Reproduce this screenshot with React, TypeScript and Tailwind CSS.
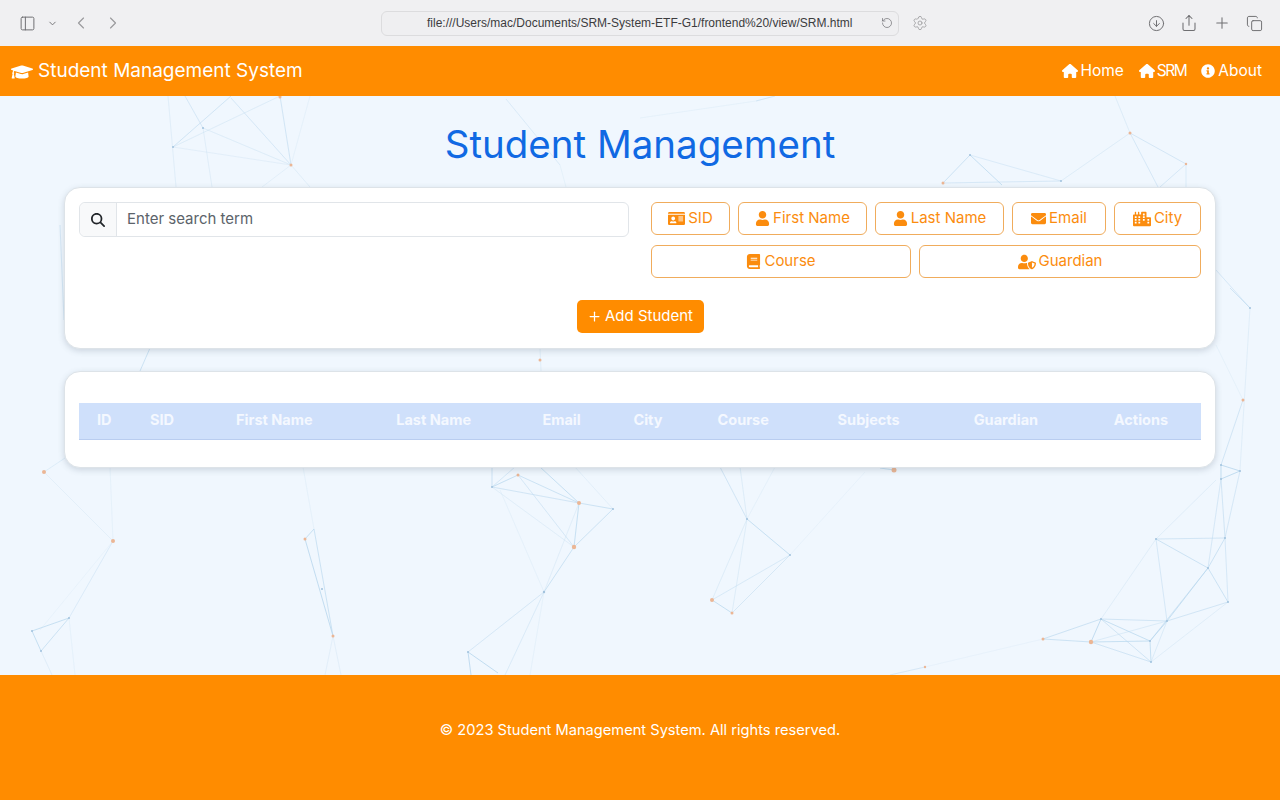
import React from 'react';
import {
  FaBook,
  FaCity,
  FaEnvelope,
  FaGraduationCap,
  FaIdCard,
  FaInfoCircle,
  FaUser,
  FaUserShield,
} from 'react-icons/fa';
import { FaHouse, FaMagnifyingGlass } from 'react-icons/fa6';
import {
  ChevronDown,
  ChevronLeft,
  ChevronRight,
  CircleArrowDown,
  Copy,
  PanelLeft,
  Plus,
  RotateCw,
  Settings,
  Share,
} from 'lucide-react';

// background network: [x1, y1, x2, y2, opacity], page coordinates minus the 96px top bars
const LINES: number[][] = [
  [173, 147, 231, 96, 0.6], [173, 147, 280, 96, 0.35], [203, 128, 291, 165, 0.35], [231, 98, 291, 165, 0.5],
  [280, 96, 291, 165, 0.6], [173, 147, 291, 165, 0.25], [168, 96, 176, 187, 0.3], [185, 96, 203, 128, 0.5],
  [203, 128, 212, 187, 0.3], [291, 165, 310, 187, 0.3], [291, 165, 262, 187, 0.25], [310, 96, 291, 165, 0.2],
  [506, 99, 560, 165, 0.4], [560, 165, 566, 187, 0.2], [756, 101, 640, 118, 0.2], [756, 101, 775, 96, 0.6],
  [970, 155, 943, 183, 0.7], [970, 155, 1002, 185, 0.8], [943, 183, 1061, 181, 0.5], [970, 155, 1061, 181, 0.4],
  [1061, 181, 1130, 133, 0.35], [1130, 133, 1186, 164, 0.55], [1130, 133, 1158, 187, 0.5], [1186, 164, 1160, 187, 0.5],
  [1186, 164, 1186, 187, 0.4], [1115, 96, 1130, 133, 0.35],
  [60, 225, 64, 320, 0.5], [1216, 270, 1250, 308, 0.5], [1230, 288, 1250, 308, 0.6], [1250, 308, 1240, 470, 0.3],
  [1243, 400, 1221, 465, 0.6], [1216, 345, 1243, 400, 0.2], [150, 348, 140, 371, 0.7], [540, 348, 541, 371, 0.3],
  [44, 472, 65, 458, 0.35], [44, 472, 113, 541, 0.25], [110, 467, 113, 541, 0.2], [113, 541, 69, 618, 0.4],
  [113, 541, 40, 630, 0.15], [69, 618, 32, 631, 0.8], [32, 631, 41, 651, 0.8], [69, 618, 41, 651, 0.7],
  [41, 651, 52, 675, 0.3], [69, 618, 75, 675, 0.2],
  [305, 539, 314, 529, 0.8], [305, 539, 333, 636, 0.9], [314, 529, 333, 636, 0.7], [303, 467, 314, 529, 0.2],
  [333, 636, 325, 675, 0.25], [333, 636, 341, 675, 0.25],
  [492, 487, 518, 475, 0.8], [492, 487, 579, 503, 0.6], [518, 475, 579, 503, 0.7], [492, 467, 492, 487, 0.7],
  [515, 467, 492, 487, 0.5], [540, 467, 579, 503, 0.8], [579, 503, 613, 509, 0.7], [579, 503, 574, 547, 0.8],
  [613, 509, 574, 547, 0.7], [518, 475, 574, 547, 0.5], [492, 487, 574, 547, 0.3], [575, 467, 613, 509, 0.25],
  [574, 547, 544, 592, 0.7], [579, 503, 544, 592, 0.3], [544, 592, 468, 652, 0.5], [544, 592, 505, 675, 0.4],
  [500, 490, 544, 592, 0.2], [468, 652, 498, 673, 0.9], [468, 652, 471, 675, 0.9], [544, 592, 530, 675, 0.2],
  [720, 467, 747, 519, 0.6], [740, 467, 747, 519, 0.35], [775, 467, 747, 519, 0.2], [747, 519, 790, 555, 0.8],
  [747, 519, 712, 600, 0.35], [747, 519, 732, 613, 0.35], [790, 555, 712, 600, 0.45], [790, 555, 732, 613, 0.5],
  [712, 600, 732, 613, 0.8], [790, 555, 865, 472, 0.15], [894, 470, 880, 468, 0.8],
  [1221, 465, 1240, 471, 0.9], [1221, 479, 1240, 471, 0.9], [1221, 465, 1221, 479, 0.9], [1240, 471, 1225, 538, 0.5],
  [1221, 479, 1225, 538, 0.6], [1221, 479, 1208, 568, 0.5], [1216, 480, 1156, 539, 0.3],
  [1156, 539, 1225, 538, 0.6], [1156, 539, 1208, 568, 0.7], [1225, 538, 1208, 568, 0.7], [1225, 538, 1228, 602, 0.5],
  [1208, 568, 1228, 602, 0.7], [1208, 568, 1167, 621, 0.8], [1156, 539, 1167, 621, 0.5], [1156, 539, 1101, 619, 0.3],
  [1228, 602, 1167, 621, 0.6], [1228, 602, 1151, 662, 0.3], [1208, 568, 1150, 641, 0.6],
  [1167, 621, 1101, 619, 0.6], [1167, 621, 1150, 641, 0.9], [1167, 621, 1151, 662, 0.4], [1101, 619, 1150, 641, 0.8],
  [1101, 619, 1151, 662, 0.6], [1101, 619, 1091, 642, 0.9], [1101, 619, 1043, 639, 0.7], [1043, 639, 1091, 642, 0.7],
  [1091, 642, 1150, 641, 0.8], [1091, 642, 1151, 662, 0.6], [1091, 642, 1167, 621, 0.4], [1150, 641, 1151, 662, 0.8],
  [1043, 639, 925, 667, 0.15], [925, 667, 890, 675, 0.5],
];

const NODES: number[][] = [
  [291, 165, 1.5, 1], [280, 97, 1.5, 1], [540, 360, 1.5, 1], [1130, 133, 1.5, 1], [1186, 164, 1.2, 1], [943, 183, 1.5, 1],
  [44, 472, 2, 1], [113, 541, 2, 1], [305, 539, 1.5, 1], [333, 636, 1.5, 1], [579, 503, 2, 1], [574, 547, 2.2, 1],
  [518, 475, 1.5, 1], [894, 470, 2.5, 1], [712, 600, 2, 1], [732, 613, 1.5, 1], [1043, 639, 1.5, 1], [1091, 642, 2.2, 1],
  [925, 667, 1.2, 1], [1243, 400, 1.5, 1],
  [173, 147, 1, 0], [203, 128, 1, 0], [970, 155, 1, 0], [1061, 181, 1, 0], [69, 618, 1, 0], [32, 631, 1, 0], [41, 651, 1, 0],
  [322, 589, 1, 0], [492, 487, 1, 0], [613, 509, 1, 0], [544, 592, 1.2, 0], [468, 652, 1, 0], [747, 519, 1, 0], [790, 555, 1, 0],
  [1156, 539, 1, 0], [1225, 538, 1, 0], [1208, 568, 1, 0], [1228, 602, 1, 0], [1167, 621, 1, 0], [1101, 619, 1, 0],
  [1150, 641, 1, 0], [1151, 662, 1, 0], [1221, 465, 1, 0], [1240, 471, 1, 0], [1221, 479, 1, 0], [1250, 308, 1, 0],
];

const filterRow1 = [
  { label: 'SID', icon: FaIdCard, width: 'w-[79px]', iconSize: 'text-[17px]' },
  { label: 'First Name', icon: FaUser, width: 'w-[129px]', iconSize: 'text-[15px]' },
  { label: 'Last Name', icon: FaUser, width: 'w-[129px]', iconSize: 'text-[15px]' },
  { label: 'Email', icon: FaEnvelope, width: 'w-[94px]', iconSize: 'text-[15px]' },
  { label: 'City', icon: FaCity, width: 'w-[87px]', iconSize: 'text-[18px]' },
];

const columns = [
  { label: 'ID', width: 'w-[53px]' },
  { label: 'SID', width: 'w-[86px]' },
  { label: 'First Name', width: 'w-[160px]' },
  { label: 'Last Name', width: 'w-[146px]' },
  { label: 'Email', width: 'w-[91px]' },
  { label: 'City', width: 'w-[84px]' },
  { label: 'Course', width: 'w-[120px]' },
  { label: 'Subjects', width: 'w-[136px]' },
  { label: 'Guardian', width: 'w-[140px]' },
  { label: 'Actions', width: 'w-[105px]' },
];

const FilterButton: React.FC<{ label: string; icon: React.ElementType; className: string; iconSize: string }> = ({ label, icon: Icon, className, iconSize }) => (
  <button className={`flex h-[33px] items-center justify-center gap-[3px] rounded-[6px] border border-[#f0ac5c] bg-white text-[15px] text-[#fb8c0e] ${className}`}>
    <Icon className={iconSize} />
    {label}
  </button>
);

const Background: React.FC = () => (
  <svg className="absolute left-0 top-0 h-[579px] w-[1280px] opacity-80" viewBox="0 96 1280 579" fill="none">
    {LINES.map(([x1, y1, x2, y2, o], i) => (
      <line key={i} x1={x1} y1={y1} x2={x2} y2={y2} stroke="#a9cfea" strokeWidth="0.9" strokeOpacity={o} />
    ))}
    {NODES.map(([cx, cy, r, warm], i) => (
      <circle key={i} cx={cx} cy={cy} r={r} fill={warm ? '#eba77c' : '#8fb6d6'} />
    ))}
  </svg>
);

const App: React.FC = () => {
  return (
    <div className="flex h-screen flex-col overflow-hidden bg-[#f0f7fe] font-['Inter',sans-serif]">
      {/* browser toolbar */}
      <div className="flex h-[46px] shrink-0 items-center bg-[#f0f0f2] text-[#6f6f72]">
        <PanelLeft className="ml-[19px] h-[17px] w-[17px]" strokeWidth={1.4} />
        <ChevronDown className="ml-[11px] h-[11px] w-[11px]" strokeWidth={2} />
        <ChevronLeft className="ml-[13px] h-[20px] w-[20px] text-[#9a9a9d]" strokeWidth={1.4} />
        <ChevronRight className="ml-[12px] h-[20px] w-[20px] text-[#9a9a9d]" strokeWidth={1.4} />
        <div className="ml-[258px] flex h-[25px] w-[518px] items-center rounded-[6px] border border-[#dcdcde] bg-[#efeff1] pl-[45px] pr-[5px]">
          <span className="flex-1 whitespace-nowrap font-['Liberation_Sans',sans-serif] text-[12px] text-[#3c3c3e]">
            file:///Users/mac/Documents/SRM-System-ETF-G1/frontend%20/view/SRM.html
          </span>
          <RotateCw className="h-[12px] w-[12px] -scale-x-100" strokeWidth={1.4} />
        </div>
        <Settings className="ml-[13px] h-[16px] w-[16px] text-[#9a9a9d]" strokeWidth={1.2} />
        <div className="ml-auto mr-[17px] flex items-center gap-[15px]">
          <CircleArrowDown className="h-[17px] w-[17px]" strokeWidth={1.4} />
          <Share className="h-[18px] w-[18px]" strokeWidth={1.4} />
          <Plus className="h-[18px] w-[18px]" strokeWidth={1.4} />
          <Copy className="h-[17px] w-[17px]" strokeWidth={1.4} />
        </div>
      </div>

      {/* navbar */}
      <nav className="flex h-[50px] shrink-0 items-center justify-between bg-[#ff8c00] pl-[11px] pr-[18px] text-white">
        <a className="flex items-center gap-[5px] pt-[1px] text-[19px]">
          <FaGraduationCap className="text-[22px]" />
          Student Management System
        </a>
        <div className="flex items-center gap-[15px] text-[15.5px]">
          <a className="flex items-center gap-[2px]"><FaHouse className="text-[16px]" />Home</a>
          <a className="flex items-center gap-[2px] tracking-[-1.5px]"><FaHouse className="text-[16px]" />SRM</a>
          <a className="flex items-center gap-[3px]"><FaInfoCircle className="text-[14px]" />About</a>
        </div>
      </nav>

      {/* main content */}
      <main className="relative flex-1">
        <Background />
        <div className="relative flex flex-col px-[64px]">
          <h1 className="mt-[25px] h-[66px] text-center text-[38.5px] leading-[46px] text-[#1069e3]">Student Management</h1>

          <section className="h-[162px] rounded-[16px] border border-[#dde3e8] bg-white p-[14px] shadow-[0_2px_6px_rgba(60,80,100,0.2)]">
            <div className="flex justify-between">
              <div className="flex h-[35px] w-[550px] rounded-[6px] border border-[#e1e5e9] bg-white">
                <span className="flex w-[37px] items-center justify-center rounded-l-[6px] border-r border-[#e1e5e9] bg-[#f8f9fa] text-[14px] text-[#212529]">
                  <FaMagnifyingGlass />
                </span>
                <input
                  className="min-w-0 flex-1 px-[10px] text-[15px] text-[#212529] outline-none placeholder:text-[#5c636a]"
                  placeholder="Enter search term"
                />
              </div>
              <div className="flex w-[550px] flex-col gap-[10px]">
                <div className="flex justify-between">
                  {filterRow1.map((f) => (
                    <FilterButton key={f.label} label={f.label} icon={f.icon} iconSize={f.iconSize} className={f.width} />
                  ))}
                </div>
                <div className="flex justify-between">
                  <FilterButton label="Course" icon={FaBook} iconSize="text-[15px]" className="w-[260px]" />
                  <FilterButton label="Guardian" icon={FaUserShield} iconSize="text-[18px]" className="w-[282px]" />
                </div>
              </div>
            </div>
            <div className="mt-[22px] flex justify-center">
              <button className="flex h-[33px] w-[127px] items-center justify-center gap-[3px] rounded-[5px] bg-[#ff8c00] text-[15px] text-white">
                <Plus className="h-[15px] w-[15px]" strokeWidth={2} />
                Add Student
              </button>
            </div>
          </section>

          <section className="mt-[22px] h-[97px] rounded-[16px] border border-[#dde3e8] bg-white px-[14px] pt-[31px] shadow-[0_2px_6px_rgba(60,80,100,0.2)]">
            <table className="w-full table-fixed border-collapse">
              <thead>
                <tr className="h-[36px] border-b border-[#b9cdf0] bg-[#cfe0fb]">
                  {columns.map((c) => (
                    <th key={c.label} className={`${c.width} pb-[1px] pl-[18px] text-left text-[14.5px] font-bold text-[#f4f8ff]`}>
                      {c.label}
                    </th>
                  ))}
                </tr>
              </thead>
            </table>
          </section>
        </div>
      </main>

      {/* footer */}
      <footer className="flex h-[125px] shrink-0 items-center justify-center bg-[#ff8c00] pb-[14px] text-[14.65px] text-white">
        © 2023 Student Management System. All rights reserved.
      </footer>
    </div>
  );
};

export default App;
